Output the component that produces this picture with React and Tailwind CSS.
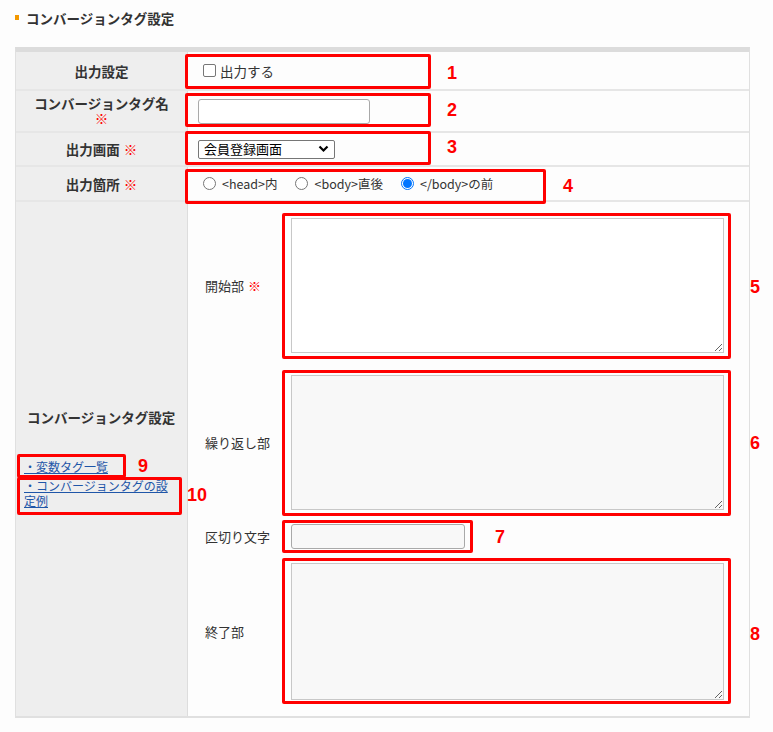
import React from 'react';

const boxes = [
  { l: 185, t: 54, w: 246, h: 35 },
  { l: 185, t: 93, w: 246, h: 34 },
  { l: 185, t: 131, w: 246, h: 34 },
  { l: 185, t: 169, w: 361, h: 35 },
  { l: 282, t: 213, w: 449, h: 146 },
  { l: 282, t: 370, w: 449, h: 146 },
  { l: 282, t: 520, w: 191, h: 33 },
  { l: 282, t: 558, w: 449, h: 146 },
  { l: 17, t: 454, w: 109, h: 24 },
  { l: 17, t: 477, w: 165, h: 38 },
];

const numbers = [
  { n: '1', x: 452, y: 73 },
  { n: '2', x: 452, y: 110 },
  { n: '3', x: 452, y: 147 },
  { n: '4', x: 568, y: 186 },
  { n: '5', x: 755, y: 287 },
  { n: '6', x: 755, y: 443 },
  { n: '7', x: 500, y: 537 },
  { n: '8', x: 755, y: 634 },
  { n: '9', x: 143, y: 466 },
  { n: '10', x: 197, y: 495 },
];

const Req = () => <span className="text-[#ff0000] ml-[4px]">※</span>;

const Radio = ({ checked, label }) => (
  <label className="flex items-center gap-[6px]">
    {checked ? (
      <span className="w-[13px] h-[13px] rounded-full border border-[#0075ff] flex items-center justify-center">
        <span className="w-[9px] h-[9px] rounded-full bg-[#0075ff]" />
      </span>
    ) : (
      <span className="w-[13px] h-[13px] rounded-full border border-[#767676] bg-white" />
    )}
    <span>{label}</span>
  </label>
);

const App = () => {
  return (
    <div className="relative w-[773px] h-[732px] bg-[#fdfdfd] text-[#333] font-['Noto_Sans_CJK_JP','Noto_Sans',sans-serif] text-[13px] leading-[18px]">
      {/* title */}
      <div className="h-[47px] pl-[15px] pt-[9px] flex items-start">
        <div className="flex items-center h-[18px]">
          <span className="w-[4px] h-[5px] bg-[#f39800] mr-[7px] -mt-[2px]" />
          <span className="font-bold text-[13.5px]">コンバージョンタグ設定</span>
        </div>
      </div>

      {/* table */}
      <div className="ml-[15px] w-[735px] border-t-[5px] border-t-[#dcdcdc] border-x border-x-[#e0e0e0] border-b-2 border-b-[#e0e0e0]">
        <div className="flex h-[39px] border-b-2 border-[#e6e6e6]">
          <div className="w-[172px] bg-[#eeeeee] border-r border-[#dddddd] flex items-center justify-center font-bold text-[13.5px]">出力設定</div>
          <div className="flex-1 flex items-center pl-[15px]">
            <span className="w-[13px] h-[13px] border border-[#767676] rounded-[2px] bg-white mr-[4px]" />
            <span className="text-[13.5px]">出力する</span>
          </div>
        </div>

        <div className="flex h-[42px] border-b-2 border-[#e6e6e6]">
          <div className="w-[172px] bg-[#eeeeee] border-r border-[#dddddd] flex flex-col items-center justify-center font-bold text-[13.5px] leading-[15px]">
            <span>コンバージョンタグ名</span>
            <span className="text-[#ff0000]">※</span>
          </div>
          <div className="flex-1 flex items-center pl-[10px]">
            <div className="w-[172px] h-[25px] border border-[#a9a9a9] rounded-[3px] bg-white" />
          </div>
        </div>

        <div className="flex h-[34px] border-b-2 border-[#e6e6e6]">
          <div className="w-[172px] bg-[#eeeeee] border-r border-[#dddddd] flex items-center justify-center font-bold text-[13.5px]">
            出力画面<Req />
          </div>
          <div className="flex-1 flex items-center pl-[10px]">
            <div className="w-[137px] h-[19px] border border-[#767676] rounded-[2px] bg-white flex items-center justify-between pl-[5px] pr-[5px] text-[13px] text-black">
              <span>会員登録画面</span>
              <svg width="11" height="8" viewBox="0 0 11 8">
                <path d="M1.5 1.5 L5.5 5.5 L9.5 1.5" fill="none" stroke="#000" strokeWidth="2.2" />
              </svg>
            </div>
          </div>
        </div>

        <div className="flex h-[35px] border-b-2 border-[#e6e6e6]">
          <div className="w-[172px] bg-[#eeeeee] border-r border-[#dddddd] flex items-center justify-center font-bold text-[13.5px]">
            出力箇所<Req />
          </div>
          <div className="flex-1 flex items-center pl-[15px] gap-[18px] text-[12.5px]">
            <Radio label="<head>内" />
            <Radio label="<body>直後" />
            <Radio checked label="</body>の前" />
          </div>
        </div>

        <div className="flex h-[514px]">
          <div className="w-[172px] bg-[#eeeeee] border-r border-[#dddddd] flex flex-col pl-[11px] pt-[205px]">
            <div className="font-bold text-[13.5px] leading-[20px]">コンバージョンタグ設定</div>
            <div className="mt-[33px] text-[12px] leading-[14px] text-[#1f56a8] -ml-[3px]">
              <a className="underline">・変数タグ一覧</a>
            </div>
            <div className="mt-[4px] text-[12px] leading-[15px] text-[#1f56a8] -ml-[3px]">
              <a className="underline">・コンバージョンタグの設<br />定例</a>
            </div>
          </div>
          <div className="flex-1 flex flex-col pt-[16px]">
            <div className="flex items-center">
              <div className="w-[103px] pl-[17px]">開始部<Req /></div>
              <textarea readOnly className="w-[433px] h-[135px] border border-[#c8c8c8] bg-white outline-none" />
            </div>
            <div className="flex items-center mt-[22px]">
              <div className="w-[103px] pl-[17px]">繰り返し部</div>
              <textarea readOnly className="w-[433px] h-[135px] border border-[#c8c8c8] bg-[#f8f8f8] outline-none" />
            </div>
            <div className="flex items-center mt-[14px]">
              <div className="w-[103px] pl-[17px]">区切り文字</div>
              <div className="w-[174px] h-[25px] border border-[#a9a9a9] rounded-[3px] bg-[#f8f8f8]" />
            </div>
            <div className="flex items-center mt-[14px]">
              <div className="w-[103px] pl-[17px]">終了部</div>
              <textarea readOnly className="w-[433px] h-[137px] border border-[#c8c8c8] bg-[#f8f8f8] outline-none" />
            </div>
          </div>
        </div>
      </div>

      {/* annotations */}
      {boxes.map((b, i) => (
        <div
          key={i}
          className="absolute border-[3px] border-[#ff0000] rounded-[2px] pointer-events-none"
          style={{ left: b.l, top: b.t, width: b.w, height: b.h }}
        />
      ))}
      {numbers.map((n) => (
        <div
          key={n.n}
          className="absolute -translate-x-1/2 -translate-y-1/2 font-['Liberation_Sans',sans-serif] font-bold text-[18px] leading-[18px] text-[#ff0000]"
          style={{ left: n.x, top: n.y }}
        >
          {n.n}
        </div>
      ))}
    </div>
  );
};

export default App;
